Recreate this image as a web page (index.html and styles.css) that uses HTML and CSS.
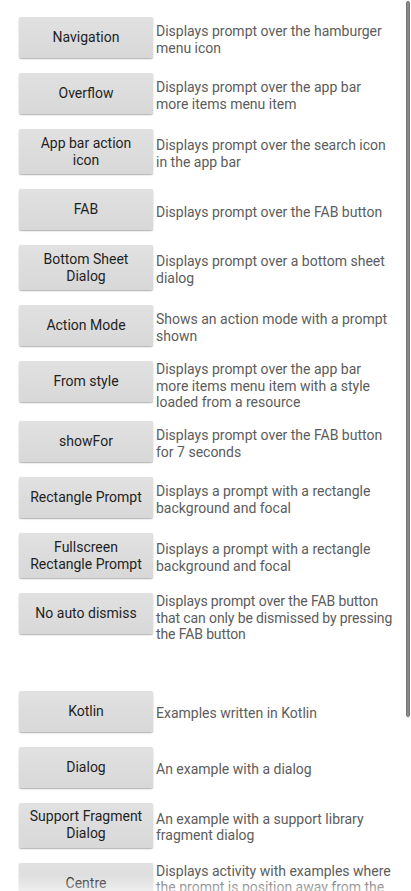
FILE: index.html
```html
<!DOCTYPE html>
<html lang="en">
<head>
<meta charset="utf-8">
<title>Examples</title>
<link rel="stylesheet" href="styles.css">
</head>
<body>
<div class="screen">
  <div class="list">
    <div class="row"><button class="btn">Navigation</button><p class="desc">Displays prompt over the hamburger menu icon</p></div>
    <div class="row"><button class="btn">Overflow</button><p class="desc">Displays prompt over the app bar more items menu item</p></div>
    <div class="row"><button class="btn">App bar action icon</button><p class="desc">Displays prompt over the search icon in the app bar</p></div>
    <div class="row"><button class="btn">FAB</button><p class="desc">Displays prompt over the FAB button</p></div>
    <div class="row"><button class="btn">Bottom Sheet Dialog</button><p class="desc">Displays prompt over a bottom sheet dialog</p></div>
    <div class="row"><button class="btn">Action Mode</button><p class="desc">Shows an action mode with a prompt shown</p></div>
    <div class="row"><button class="btn">From style</button><p class="desc">Displays prompt over the app bar more items menu item with a style loaded from a resource</p></div>
    <div class="row"><button class="btn">showFor</button><p class="desc">Displays prompt over the FAB button for 7 seconds</p></div>
    <div class="row"><button class="btn">Rectangle Prompt</button><p class="desc">Displays a prompt with a rectangle background and focal</p></div>
    <div class="row"><button class="btn">Fullscreen Rectangle Prompt</button><p class="desc">Displays a prompt with a rectangle background and focal</p></div>
    <div class="row"><button class="btn">No auto dismiss</button><p class="desc desc-tight">Displays prompt over the FAB button that can only be dismissed by pressing the FAB button</p></div>
    <div class="spacer"></div>
    <div class="row"><button class="btn">Kotlin</button><p class="desc">Examples written in Kotlin</p></div>
    <div class="row"><button class="btn">Dialog</button><p class="desc">An example with a dialog</p></div>
    <div class="row"><button class="btn">Support Fragment Dialog</button><p class="desc">An example with a support library fragment dialog</p></div>
    <div class="row"><button class="btn">Centre</button><p class="desc">Displays activity with examples where the prompt is position away from the centre</p></div>
  </div>
  <div class="fade"></div>
  <div class="scrollbar"></div>
</div>
</body>
</html>
```

FILE: styles.css
```css
html, body {
  margin: 0;
  padding: 0;
  background: #ffffff;
}

body {
  font-family: Roboto, "Noto Sans", "Liberation Sans", sans-serif;
  width: 411px;
  height: 891px;
  overflow: hidden;
}

.screen {
  position: relative;
  width: 411px;
  height: 891px;
  overflow: hidden;
  background: #ffffff;
}

.list {
  display: flex;
  flex-direction: column;
  padding: 9.5px 14.5px 0 19px;
}

.row {
  display: flex;
  align-items: center;
  min-height: 56px;
}

.btn {
  align-self: flex-start;
  flex: 0 0 134px;
  width: 134px;
  min-height: 41px;
  margin: 7.5px 3px 7.5px 0;
  padding: 5.5px 8px;
  border: none;
  border-radius: 2px;
  background: linear-gradient(#e1e1e1, #d8d8d8);
  box-shadow: 0 1px 1.5px rgba(0, 0, 0, 0.32), 0 0 0.6px rgba(0, 0, 0, 0.25);
  font-family: Roboto, "Noto Sans", "Liberation Sans", sans-serif;
  font-size: 14px;
  line-height: 17px;
  font-weight: 400;
  color: #1f1f1f;
  text-align: center;
}

.desc {
  flex: 1 1 auto;
  margin: 0;
  padding: 7.5px 0 3px;
  font-size: 14px;
  line-height: 16.5px;
  color: #5c5c5c;
}

.desc-tight {
  letter-spacing: -0.12px;
}

.spacer {
  height: 37.5px;
}

.fade {
  position: absolute;
  left: 0;
  right: 0;
  bottom: 0;
  height: 16px;
  background: linear-gradient(rgba(255, 255, 255, 0), rgba(255, 255, 255, 0.55));
  pointer-events: none;
}

.scrollbar {
  position: absolute;
  top: 1px;
  left: 405.5px;
  width: 4px;
  height: 716px;
  box-sizing: border-box;
  border-radius: 2px;
  background: #8a8a8a;
  border: 1px solid #767676;
}
```
